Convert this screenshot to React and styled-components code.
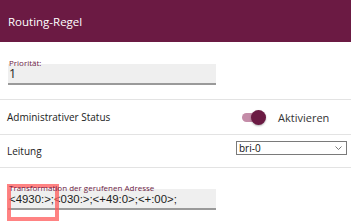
import styled, { createGlobalStyle } from 'styled-components'

const GlobalStyle = createGlobalStyle`
    body{
        margin: 0;
        background: #ffffff;
        font-family: "Open Sans", "Liberation Sans", sans-serif;
        color: #222;
    }
`

const Header = styled.header`
    height: 42px;
    background: #6b1a43;
    color: #fff;
    display: flex;
    align-items: center;
    padding-left: 8px;
    font-size: 11.5px;
`

const FieldBlock = styled.div`
    position: relative;
    padding: ${({ top }) => top}px 0 ${({ bottom }) => bottom}px 8px;
    border-bottom: ${({ last }) => (last ? 'none' : '1px solid #e3e3e3')};
`

const FieldLabel = styled.div`
    font-size: 8px;
    line-height: 8px;
    color: #6b1a43;
    margin-bottom: -3px;
    padding-left: 1px;
    position: relative;
    z-index: 1;
`

const TextInput = styled.div`
    width: 207px;
    height: 19px;
    background: #efefef;
    border-bottom: 2px solid #9a9a9a;
    display: flex;
    align-items: center;
    padding-left: 1px;
    font-family: ${({ mono }) => (mono ? '"Liberation Sans", Arial, sans-serif' : '"Open Sans", sans-serif')};
    font-size: ${({ mono }) => (mono ? '11.4px' : '12.5px')};
    color: #1c1c1c;
    white-space: nowrap;
`

const Row = styled.div`
    display: grid;
    grid-template-columns: 228px 1fr;
    align-items: center;
    height: ${({ h }) => h}px;
    padding-left: 7px;
    border-bottom: 1px solid #e3e3e3;
    font-size: 10px;
`

const ToggleWrap = styled.div`
    display: flex;
    align-items: center;
    gap: 14px;
    padding-left: 7px;
    font-size: 11px;
    color: #333;
`

const Toggle = styled.div`
    position: relative;
    width: 22px;
    height: 9px;
    border-radius: 5px;
    background: #c48ca8;
`

const Knob = styled.span`
    position: absolute;
    right: -2px;
    top: -3px;
    width: 15px;
    height: 15px;
    border-radius: 50%;
    background: #6b1a43;
    box-shadow: 0 1px 2px rgba(0,0,0,0.3);
`

const Select = styled.div`
    width: 103px;
    height: 12px;
    border: 1px solid #7a7a7a;
    background: #fff;
    display: flex;
    align-items: center;
    justify-content: space-between;
    padding: 0 4px 0 2px;
    box-sizing: content-box;
    font-size: 10px;
    color: #111;
    margin-left: 1px;
    margin-top: -6px;
`

const Highlight = styled.div`
    position: absolute;
    left: 7px;
    top: 16px;
    width: 44px;
    height: 29px;
    border: 4px solid rgba(255, 90, 90, 0.75);
`

const App = () => {
    return (
        <>
            <GlobalStyle />
            <Header>Routing-Regel</Header>

            <FieldBlock top={17} bottom={14}>
                <FieldLabel>Priorität:</FieldLabel>
                <TextInput>1</TextInput>
            </FieldBlock>

            <Row h={34}>
                <span>Administrativer Status</span>
                <ToggleWrap>
                    <Toggle><Knob /></Toggle>
                    Aktivieren
                </ToggleWrap>
            </Row>

            <Row h={32}>
                <span>Leitung</span>
                <Select>
                    bri-0
                    <svg width="7" height="4" viewBox="0 0 7 4">
                        <path d="M0.5 0.5 L3.5 3.5 L6.5 0.5" fill="none" stroke="#555" strokeWidth="0.8" />
                    </svg>
                </Select>
            </Row>

            <FieldBlock top={16} bottom={14} last>
                <FieldLabel>Transformation der gerufenen Adresse</FieldLabel>
                <TextInput mono>&lt;4930:&gt;;&lt;030:&gt;;&lt;+49:0&gt;;&lt;+:00&gt;;</TextInput>
                <Highlight />
            </FieldBlock>
        </>
    )
}

export default App
